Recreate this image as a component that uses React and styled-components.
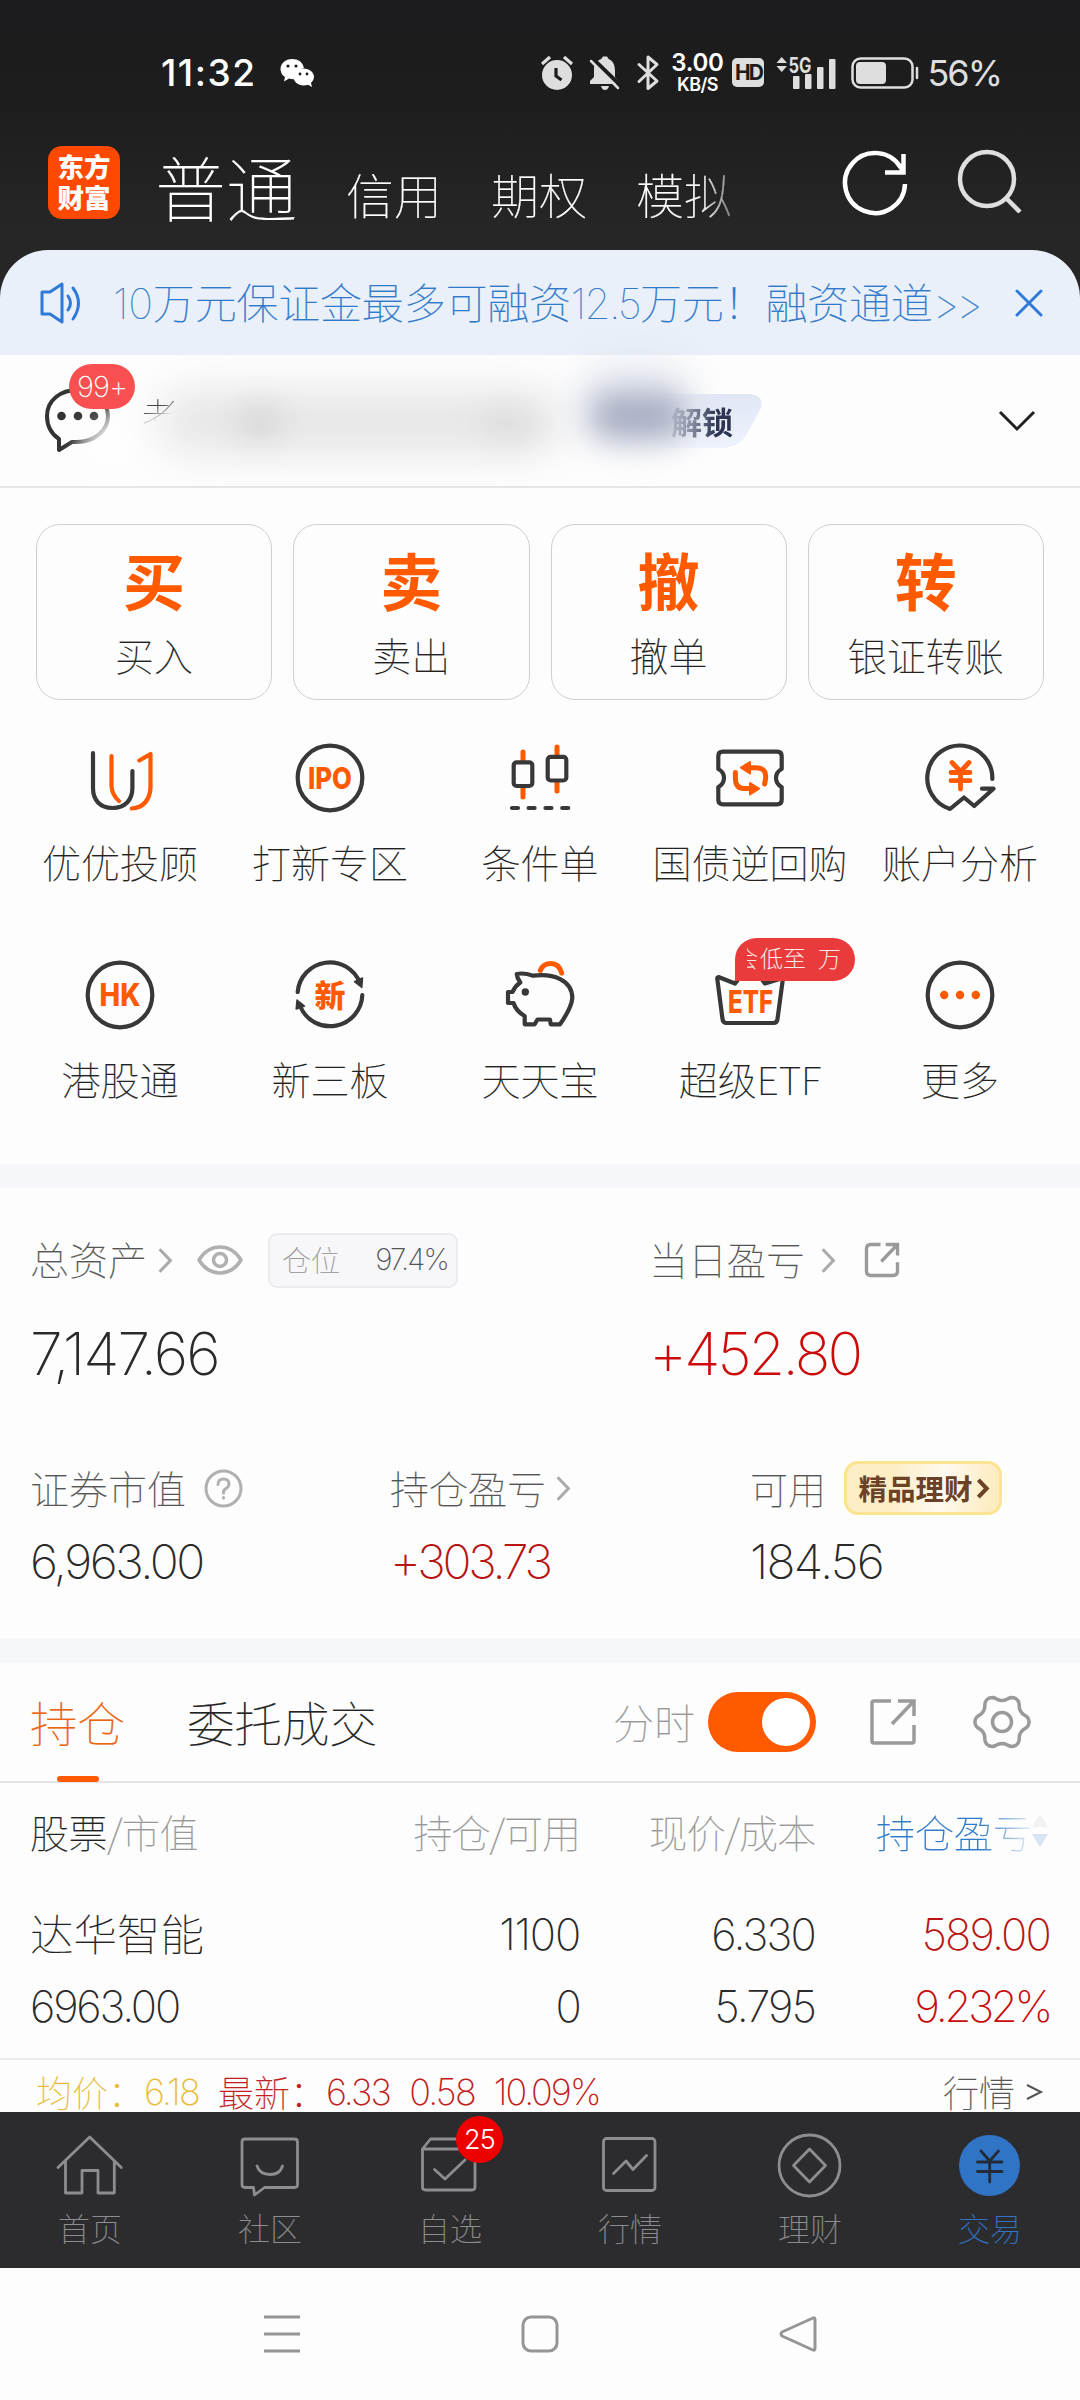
import styled, { createGlobalStyle, css } from "styled-components";

const GlobalStyle = createGlobalStyle`
  body {
    margin: 0;
    background: #fdfdfd;
    font-family: "Noto Sans CJK SC", sans-serif;
    font-weight: 100;
    color: #222;
  }
  * { box-sizing: border-box; }
`;

const ORANGE = "#ff5a00";
const INK = "#383838";
const GRAY = "#9a9a9a";

const Page = styled.div`
  width: 1080px;
  height: 2400px;
  overflow: hidden;
  display: flex;
  flex-direction: column;
  background: #fdfdfd;
`;

/* 중국어 라벨 */
const Label = styled.span`
  font-size: ${(p) => p.$size || 39}px;
  line-height: 1.2;
  font-weight: ${(p) => p.$weight || 100};
  letter-spacing: ${(p) => p.$spacing || 0}px;
  color: ${(p) => p.$color || "#222"};
  -webkit-text-stroke: ${(p) => (p.$weight ? 0 : 0.2)}px ${(p) => p.$color || "#222"};
  padding-bottom: ${(p) => p.$lift || 0}px;
  white-space: nowrap;
`;

/* 숫자 */
const Num = styled.span`
  font-family: "Inter", sans-serif;
  font-size: ${(p) => p.$size || 43.5}px;
  font-weight: ${(p) => p.$weight || 200};
  line-height: 1;
  letter-spacing: ${(p) => p.$spacing ?? -1.8}px;
  color: ${(p) => p.$color || "#2a2a2a"};
  white-space: nowrap;
`;

const Svg = styled.svg`
  display: block;
  flex: none;
  fill: none;
  stroke: ${(p) => p.$stroke || INK};
  stroke-width: ${(p) => p.$sw || 4};
  stroke-linecap: ${(p) => p.$cap || "round"};
  stroke-linejoin: ${(p) => p.$cap ? "miter" : "round"};
  overflow: visible;
`;

/* ---------- top ---------- */
const Top = styled.header`
  height: 298px;
  flex: none;
  background: linear-gradient(#1c1c1e 0, #1d1d1e 100px, #262626 230px);
`;

const StatusBar = styled.div`
  height: 145px;
  padding: 0 79px 0 161px;
  display: flex;
  align-items: center;
`;

const StatusRight = styled.div`
  margin-left: auto;
  display: flex;
  align-items: center;
`;

const NetSpeed = styled.div`
  width: 52px;
  margin: 0 9px 0 11px;
  display: flex;
  flex-direction: column;
  align-items: center;
  gap: 1px;
`;

const HdBadge = styled.div`
  width: 32px;
  height: 29px;
  border-radius: 5px;
  background: #dedede;
  display: flex;
  align-items: center;
  justify-content: center;
  margin-right: 12px;
`;

const TitleBar = styled.div`
  height: 105px;
  padding: 1px 58px 0 48px;
  display: flex;
  align-items: flex-start;
`;

const Logo = styled.div`
  width: 72px;
  height: 73px;
  border-radius: 14px;
  background: #ff4800;
  display: flex;
  flex-direction: column;
  align-items: center;
  justify-content: center;
  font-size: 26.5px;
  font-weight: 900;
  line-height: 31px;
  color: #fff;
  padding-bottom: 3px;
`;

const Titles = styled.nav`
  width: 610px;
  height: 82px;
  margin-left: 35px;
  display: flex;
  align-items: flex-end;
  gap: 49px;
  mask-image: linear-gradient(90deg, #000 545px, transparent 600px);
`;

const TitleTools = styled.div`
  margin: 4px 0 0 auto;
  display: flex;
  gap: 50px;
`;

/* ---------- sheet ---------- */
const Notice = styled.div`
  height: 105px;
  margin-top: -48px;
  flex: none;
  border-radius: 48px 48px 0 0;
  background: #eaf0f9;
  display: flex;
  align-items: center;
  padding: 2px 37px 0 39px;
`;

const NoticeText = styled.span`
  flex: 1;
  margin-left: 32px;
  font-family: "Inter", "Noto Sans CJK SC", sans-serif;
  font-size: 42px;
  letter-spacing: -0.2px;
  line-height: 50px;
  color: #2f7ac9;
  -webkit-text-stroke: 0.2px #2f7ac9;
  white-space: nowrap;
`;

const Tight = styled.span`
  letter-spacing: ${(p) => p.$by}px;
`;

const Account = styled.div`
  position: relative;
  height: 133px;
  flex: none;
  border-bottom: 2px solid #e6e6e8;
  display: flex;
  align-items: center;
  padding: 0 44px;
`;

const MsgBadge = styled.div`
  position: absolute;
  left: 69px;
  top: 9px;
  width: 66px;
  height: 45px;
  border-radius: 23px;
  background: #f85050;
  display: flex;
  align-items: center;
  justify-content: center;
`;

const HiddenName = styled.span`
  position: absolute;
  left: 142px;
  top: 38px;
  font-size: 36px;
  line-height: 1.2;
  color: #444;
  mask-image: linear-gradient(155deg, #000 35%, transparent 58%);
`;

/* 개인정보 흐림 처리 */
const Smudge = styled.div`
  position: absolute;
  left: ${(p) => p.$x}px;
  top: ${(p) => p.$y}px;
  width: ${(p) => p.$w}px;
  height: ${(p) => p.$h}px;
  border-radius: 30px;
  background: ${(p) => p.$color};
  filter: blur(${(p) => p.$blur}px);
`;

const Unlock = styled.div`
  position: absolute;
  left: 600px;
  top: 39px;
  width: 162px;
  height: 54px;
  background: linear-gradient(#e2e7f6, #eef2fd);
  clip-path: path("M0 0H150Q164 1 161 14L148 38Q140 54 120 54H0Z");
  display: flex;
  align-items: center;
  justify-content: flex-end;
  padding-right: 29px;
  mask-image: linear-gradient(90deg, transparent 55px, #000 115px);
`;

const Trades = styled.div`
  padding: 36px 36px 0;
  display: grid;
  grid-template-columns: repeat(4, 1fr);
  gap: 21px;
`;

const TradeCard = styled.div`
  height: 176px;
  border: 1.5px solid #cfcfd2;
  border-radius: 24px;
  display: flex;
  flex-direction: column;
  align-items: center;
  padding-top: 16px;
`;

const TradeGlyph = styled.span`
  font-size: 62px;
  line-height: 76px;
  height: 90px;
  font-weight: 700;
  color: ${ORANGE};
`;

const Shortcuts = styled.div`
  height: 464px;
  flex: none;
  padding: 43px 15px 0;
  display: grid;
  grid-template-columns: repeat(5, 210px);
  grid-auto-rows: 217px;
`;

const Shortcut = styled.div`
  position: relative;
  display: flex;
  flex-direction: column;
  align-items: center;
  gap: 25px;
`;

const Promo = styled.div`
  position: absolute;
  left: 90px;
  top: -22px;
  width: 120px;
  height: 43px;
  border-radius: 22px 22px 22px 0;
  background: #e93b3b;
  display: flex;
  align-items: center;
  padding: 0 0 3px 12px;
`;

const PromoCut = styled.span`
  width: 11px;
  height: 29px;
  overflow: hidden;
  display: flex;
  justify-content: flex-end;
  margin-right: 2px;
`;

const Band = styled.div`
  height: 24px;
  flex: none;
  background: #f6f7fa;
`;

/* ---------- assets ---------- */
const Assets = styled.section`
  height: 450px;
  flex: none;
  padding: 42px 30px 0;
`;

const AssetGrid = styled.div`
  display: grid;
  grid-template-columns: ${(p) => p.$cols};
  margin-bottom: 42px;
`;

const AssetHead = styled.div`
  height: 60px;
  display: flex;
  align-items: center;
`;

const AssetValue = styled.div`
  height: ${(p) => p.$h}px;
  display: flex;
  align-items: center;
`;

const Position = styled.div`
  width: 190px;
  height: 55px;
  margin-left: 25px;
  border: 2px solid #ececee;
  border-radius: 9px;
  background: #f7f7fa;
  display: flex;
  align-items: center;
  justify-content: space-between;
  padding: 0 8px 0 12px;
`;

const Premium = styled.div`
  width: 158px;
  height: 54px;
  margin-left: 18px;
  border: 3px solid #fbe391;
  border-radius: 14px;
  background: linear-gradient(100deg, #fdeec6 30%, #fffaf0 62%, #fdecc0 95%);
  display: flex;
  align-items: center;
  justify-content: center;
  gap: 4px;
`;

/* ---------- holdings ---------- */
const HoldTabs = styled.div`
  height: 121px;
  flex: none;
  border-bottom: 2px solid #e3e3e5;
  padding: 0 50px 0 30px;
  display: flex;
  align-items: center;
`;

const HoldTab = styled.div`
  position: relative;
  height: 120px;
  display: flex;
  align-items: center;
  margin-right: 62px;
  ${(p) =>
    p.$active &&
    css`
      &::after {
        content: "";
        position: absolute;
        left: 27px;
        bottom: 0;
        width: 42px;
        height: 6px;
        border-radius: 3px;
        background: ${ORANGE};
      }
    `}
`;

const HoldTools = styled.div`
  margin-left: auto;
  display: flex;
  align-items: center;
`;

const Toggle = styled.div`
  width: 108px;
  height: 60px;
  border-radius: 30px;
  background: ${ORANGE};
  padding: 6px;
  display: flex;
  justify-content: flex-end;
  margin: 0 54px 0 13px;
`;

const Knob = styled.div`
  width: 48px;
  height: 48px;
  border-radius: 50%;
  background: #fff;
`;

const HoldRow = styled.div`
  height: ${(p) => p.$h}px;
  flex: none;
  padding: 0 30px ${(p) => p.$pb || 0}px 30px;
  display: grid;
  grid-template-columns: 250px 300px 235px 235px;
  align-items: center;
`;

const Right = styled.div`
  display: flex;
  align-items: center;
  justify-content: flex-end;
`;

const SortHead = styled.div`
  padding-left: 61px;
  display: flex;
  align-items: center;
  white-space: nowrap;
  mask-image: linear-gradient(90deg, #000 165px, rgba(0, 0, 0, 0.18) 212px);
`;

const RowEnd = styled.div`
  height: 28px;
  flex: none;
`;

const PriceStrip = styled.div`
  height: 54px;
  flex: none;
  border-top: 2px solid #ececee;
  padding: 11px 38px 0 36px;
  display: flex;
  align-items: center;
`;

const Gap = styled.span`
  width: ${(p) => p.$w}px;
  flex: none;
`;

const Spacer = styled.span`
  flex: 1;
`;

/* ---------- bottom ---------- */
const TabBar = styled.nav`
  height: 156px;
  flex: none;
  background: #2c2c2e;
  display: grid;
  grid-template-columns: repeat(6, 180px);
`;

const TabItem = styled.div`
  position: relative;
  display: flex;
  flex-direction: column;
  align-items: center;
  padding-top: 21px;
  gap: 11px;
`;

const TabBadge = styled.div`
  position: absolute;
  left: 96px;
  top: 4px;
  width: 47px;
  height: 47px;
  border-radius: 50%;
  background: #ee0000;
  display: flex;
  align-items: center;
  justify-content: center;
`;

const SysNav = styled.div`
  height: 132px;
  flex: none;
  display: flex;
  align-items: center;
  justify-content: space-between;
  padding: 0 263px;
`;

const IconText = styled.text`
  font-family: "Inter", "Noto Sans CJK SC", sans-serif;
  font-size: ${(p) => p.$size || 30}px;
  font-weight: ${(p) => p.$weight || 800};
  fill: ${ORANGE};
  stroke: none;
`;

const ShortcutIcon = ({ children }) => (
  <Svg width="70" height="70" viewBox="0 0 70 70" $sw={4.2}>
    {children}
  </Svg>
);

// 톱니 6개짜리 설정 아이콘 외곽선
const gearPath =
  Array.from({ length: 72 }, (_, i) => {
    const a = (i * 5 * Math.PI) / 180;
    const wave = Math.cos(6 * a);
    const r = 24.3 + 2.8 * Math.sign(wave) * Math.pow(Math.abs(wave), 0.7);
    return `${i ? "L" : "M"}${(28 + r * Math.cos(a)).toFixed(1)} ${(28 + r * Math.sin(a)).toFixed(1)}`;
  }).join("") + "Z";

const shortcuts = [
  {
    name: "优优投顾",
    icon: (
      <>
        <path d="M8 10V45C8 57 15 65 27.500 65S47.400 57 47.400 45V28" />
        <path stroke={ORANGE} d="M26.500 13V43Q27 52 34 58M54.300 17.500L65.500 11V45Q64 64 46.700 65.500" />
      </>
    ),
  },
  {
    name: "打新专区",
    icon: (
      <>
        <circle cx="35" cy="35" r="32.300" />
        <IconText x="13" y="46" textLength="44" lengthAdjust="spacingAndGlyphs">IPO</IconText>
      </>
    ),
  },
  {
    name: "条件单",
    icon: (
      <>
        <path stroke={ORANGE} strokeWidth="5" d="M18 9V18M18 45V54M52 4V12M52 40V48" />
        <rect x="8.700" y="19.300" width="18.600" height="23.700" rx="3" />
        <rect x="42.700" y="13.800" width="18.600" height="23.700" rx="3" />
        <path d="M7 65H13M23.600 65H29.600M40.500 65H46.500M57.200 65H63.200" />
      </>
    ),
  },
  {
    name: "国债逆回购",
    icon: (
      <>
        <path d="M8 8.700H62Q66.700 8.700 66.700 13V26Q61 29 61 35T66.700 44V57Q66.700 61.300 62 61.300H8Q3.300 61.300 3.300 57V44Q9 41 9 35T3.300 26V13Q3.300 8.700 8 8.700Z" />
        <path stroke={ORANGE} strokeWidth="5" d="M20.400 29.500V35Q20.400 45.500 29 45.500H36M49.600 41Q54 24.700 41 24.700H34" />
        <path fill={ORANGE} stroke={ORANGE} strokeWidth="2" d="M35 40L44 45.700L35 51.500ZM35 19L26 24.700L35 30.500Z" />
      </>
    ),
  },
  {
    name: "账户分析",
    icon: (
      <>
        <path d="M67.300 36A32.500 32.500 0 1 0 25 66L39 54.500L49.200 63L68.500 45.700H57" />
        <path stroke={ORANGE} strokeWidth="4.800" d="M27 19.500L35.500 28.500L44 19.500M26 29.500H45M26 37.700H45M35.500 29V46" />
      </>
    ),
  },
  {
    name: "港股通",
    icon: (
      <>
        <circle cx="35" cy="35" r="32.300" />
        <IconText x="14.500" y="46" $size={31} textLength="41" lengthAdjust="spacingAndGlyphs">HK</IconText>
      </>
    ),
  },
  {
    name: "新三板",
    icon: (
      <>
        <path d="M2.700 32A32.300 32.300 0 0 1 65 23M67.300 35A32.300 32.300 0 0 1 5.500 47" />
        <path fill={INK} strokeWidth="1.500" d="M59.500 21.700L67.500 18L66.800 27.500ZM2 40L1.200 49L9.500 46Z" />
        <IconText x="19.500" y="46.500" $size={31} $weight={900}>新</IconText>
      </>
    ),
  },
  {
    name: "天天宝",
    icon: (
      <>
        <path d="M11.700 14Q19 12.500 28 15.700C48 13 67.300 20 67.300 38Q66.500 48 55 64.300H45.700L45 59.500H32.500L29.700 64.300H19.700V56Q11 51 8.500 43H3V32H7.500Q10 26 15.300 22.500Q12 18 11.700 14Z" />
        <circle cx="20.300" cy="32" r="3.700" fill={INK} stroke="none" />
        <path stroke={ORANGE} strokeWidth="5" d="M35.300 10.500Q38 3.500 46 3.500T56.700 13" />
      </>
    ),
  },
  {
    name: "超级ETF",
    promo: true,
    icon: (
      <>
        <path d="M20 23.500L3.500 17Q2 17 2.300 19L7.500 59Q8 63 11.500 63H58.500Q62 63 62.500 59L68 18L50 23.500Q45 18 44 8H27Q25 18 20 23.500Z" />
        <IconText x="13" y="53" $size={31} textLength="45" lengthAdjust="spacingAndGlyphs">ETF</IconText>
      </>
    ),
  },
  {
    name: "更多",
    icon: (
      <>
        <circle cx="35" cy="35" r="32.300" />
        <g fill={ORANGE} stroke="none">
          <circle cx="19.200" cy="35" r="4.200" />
          <circle cx="35" cy="35" r="4.200" />
          <circle cx="50.800" cy="35" r="4.200" />
        </g>
      </>
    ),
  },
];

const tabs = [
  { name: "首页", icon: <path d="M0 34.500L31.700 4L63.300 34.500M7.500 28V60H24V37.500H40V60H56.300V28" /> },
  {
    name: "社区",
    icon: <path d="M7 6H56.500Q59.500 6 59.500 9V51.500Q59.500 54.500 56.500 54.500H26.500L16.500 62L15.500 54.500H7Q4 54.500 4 51.500V9Q4 6 7 6ZM19 33Q22 41.500 32 41.500T44.500 33" />,
  },
  {
    name: "自选",
    badge: "25",
    icon: <path d="M4.500 16V54Q4.500 57 7.500 57H54Q57 57 57 54V16ZM4.500 16L12.500 6H49L57 16M16.500 36.500L27 46L47 27" />,
  },
  {
    name: "行情",
    icon: (
      <>
        <rect x="5.500" y="5.500" width="51.500" height="52" rx="3" />
        <path d="M15.500 40.500L28 28L35 36.500L48.500 22.500" />
      </>
    ),
  },
  {
    name: "理财",
    icon: (
      <>
        <circle cx="31.500" cy="32.500" r="30.500" />
        <path d="M31.500 16L47.500 32.500L31.500 49L15.500 32.500Z" />
      </>
    ),
  },
  {
    name: "交易",
    active: true,
    icon: (
      <>
        <circle cx="31.500" cy="32.500" r="30.500" fill="#2f74c5" stroke="none" />
        <path stroke="#232b38" d="M23 18L31.700 28L40.500 18M19.500 29H44M19.500 38.500H44M31.700 28V49" />
      </>
    ),
  },
];

const Chevron = ({ w = 14, h = 25, color = "#aaa", sw = 2.8 }) => (
  <Svg width={w} height={h} viewBox="0 0 13 23" $stroke={color} $sw={sw} $cap="butt">
    <path d="M1.500 1L11.500 11.500L1.500 22" />
  </Svg>
);

const Share = ({ size, sw, r }) => (
  <Svg width={size} height={size} viewBox="0 0 46 46" $stroke={GRAY} $sw={sw} $cap="butt">
    <path d={`M21 2H${2 + r}Q2 2 2 ${2 + r}V${44 - r}Q2 44 ${2 + r} 44H${44 - r}Q44 44 44 ${44 - r}V26M28 2H44V17M44 2L22 25`} />
  </Svg>
);

const Status = () => (
  <StatusBar>
    <Num $size={37} $weight={500} $color="#fff" $spacing={1.5}>11:32</Num>
    <Gap $w={24} />
    <Svg width="35" height="30" viewBox="0 0 35 30" $sw={0.01}>
      <path fill="#fff" d="M12 1C5.500 1 .5 5.500 .5 11Q.5 16 5 19L4 23.500L9 20.500Q12 21.500 15 21A11 9.500 0 0 1 24 10Q22 1 12 1Z" />
      <path fill="#fff" d="M23.500 10.500C17.500 10.500 13.500 14.500 13.500 19S18 27.500 23.500 27.500Q26 27.500 28 26.800L32 29L31 25Q34 22.500 34 19C34 14.500 29.500 10.500 23.500 10.500Z" />
      <g fill="#1c1c1e">
        <circle cx="8" cy="8" r="1.600" /><circle cx="16" cy="8" r="1.600" />
        <circle cx="20" cy="16" r="1.400" /><circle cx="27" cy="16" r="1.400" />
      </g>
    </Svg>
    <StatusRight>
      <Svg width="32" height="36" viewBox="0 0 32 36" $stroke="#dedede" $sw={3.2} $cap="butt">
        <circle cx="16" cy="20" r="15" fill="#dedede" stroke="none" />
        <path d="M1 9L9 2M31 9L23 2" />
        <path stroke="#1c1c1e" d="M15 13V21L20.500 25" />
      </Svg>
      <Gap $w={16} />
      <Svg width="32" height="36" viewBox="0 0 32 36" $stroke="#dedede" $sw={2.500}>
        <path fill="#dedede" stroke="none" d="M10 5Q13 4 14 1.500H18Q19 4 21.500 5Q26 8 26 16V22L30 27V29H1V26L5 22V13Q5 8 10 5ZM12 31H20Q19 35 16 35T12 31Z" />
        <path stroke="#1c1c1e" strokeWidth="4" d="M4 4L32 31" />
        <path d="M2 6L29 33" />
      </Svg>
      <Gap $w={15} />
      <Svg width="24" height="36" viewBox="0 0 24 36" $stroke="#dedede" $sw={3}>
        <path d="M3 9.500L21 26L12 33.500V2L21 9.500L3 26.500" />
      </Svg>
      <NetSpeed>
        <Num $size={24} $weight={600} $color="#fff" $spacing={-0.3}>3.00</Num>
        <Num $size={18} $weight={600} $color="#fff" $spacing={-0.6}>KB/S</Num>
      </NetSpeed>
      <HdBadge>
        <Num $size={21} $weight={700} $color="#1c1c1e" $spacing={-2}>HD</Num>
      </HdBadge>
      <Svg width="62" height="34" viewBox="0 0 62 34" $sw={0.01}>
        <g fill="#dedede">
          <path d="M.5 7H11L5.700 1ZM.5 10H11L5.700 16Z" />
          <rect x="17" y="20" width="6.500" height="13" rx="1" />
          <rect x="29" y="18" width="6.500" height="15" rx="1" />
          <rect x="41" y="11" width="6.500" height="22" rx="1" />
          <rect x="53" y="3" width="6.500" height="30" rx="1" />
          <text x="12.500" y="16.500" fontFamily="Inter" fontSize="21" fontWeight="700" textLength="23" lengthAdjust="spacingAndGlyphs">5G</text>
        </g>
      </Svg>
      <Gap $w={13} />
      <Svg width="68" height="32" viewBox="0 0 68 32" $stroke="#dedede" $sw={2.500}>
        <rect x="1.500" y="1.500" width="60" height="29" rx="8" />
        <rect x="5" y="5" width="30" height="22" rx="4" fill="#dedede" stroke="none" />
        <path d="M66 11V21" />
      </Svg>
      <Gap $w={8} />
      <Num $size={36} $weight={400} $color="#dedede" $spacing={-2}>56%</Num>
    </StatusRight>
  </StatusBar>
);

const App = () => (
  <>
    <GlobalStyle />
    <Page>
      <Top>
        <Status />
        <TitleBar>
          <Logo>
            <span>东方</span>
            <span>财富</span>
          </Logo>
          <Titles>
            <Label $size={71}>
              <Label $size={71} $color="#fff">普通</Label>
            </Label>
            <Label $size={48} $color="#fff" $lift={5}>信用</Label>
            <Label $size={48} $color="#fff" $lift={5}>期权</Label>
            <Label $size={48} $color="#fff" $lift={5}>模拟</Label>
          </Titles>
          <TitleTools>
            <Svg width="64" height="64" viewBox="0 0 64 64" $stroke="#fff" $sw={4.500} $cap="butt">
              <path d="M61 34A30 30 0 1 1 57 18L60 22M59.500 4V22.500H41" />
            </Svg>
            <Svg width="64" height="64" viewBox="0 0 64 64" $stroke="#dfdfdf" $sw={4.500} $cap="butt">
              <circle cx="29" cy="29" r="27" />
              <path d="M48 48L62 62" />
            </Svg>
          </TitleTools>
        </TitleBar>
      </Top>

      <Notice>
        <Svg width="42" height="42" viewBox="-1 1 42 42" $stroke="#2f7ad8" $sw={3}>
          <path d="M2 10H10L22 2V40L10 32H2ZM28 14Q33 21 28 28M33 6Q44 21 33 37" />
        </Svg>
        <NoticeText>
          10万元保证金最多可融资<Tight $by={-1.7}>12.5</Tight>万元！融资通道<Tight $by={-3.4}>&gt;&gt;</Tight>
        </NoticeText>
        <Svg width="28" height="28" viewBox="0 1 28 28" $stroke="#2f7ad8" $sw={3}>
          <path d="M2 2L26 26M26 2L2 26" />
        </Svg>
      </Notice>

      <Account>
        <Svg width="66" height="66" viewBox="0 0 66 66" $sw={4} $stroke="url(#bubble)">
          <defs>
            <linearGradient id="bubble" x1="0.3" y1="0.4" x2="1" y2="1">
              <stop offset="0.4" stopColor="#333" />
              <stop offset="0.8" stopColor="#ccc" />
            </linearGradient>
          </defs>
          <path d="M15 51Q3 43 3 28C3 12 17 2 33 2S64 13 64 28S50 54 33 54Q30 54 28 54L15 62Z" />
          <g fill="#333" stroke="none">
            <circle cx="17.500" cy="28" r="4.300" />
            <circle cx="34" cy="28" r="4.300" />
            <circle cx="50" cy="28" r="4.300" />
          </g>
        </Svg>
        <Smudge $x={84} $y={66} $w={60} $h={50} $blur={14} $color="rgba(255,255,255,.6)" />
        <Smudge $x={160} $y={38} $w={400} $h={58} $blur={22} $color="#e4e4e4" />
        <Smudge $x={238} $y={48} $w={44} $h={38} $blur={14} $color="rgba(180,180,180,.3)" />
        <Smudge $x={480} $y={52} $w={60} $h={36} $blur={14} $color="rgba(190,190,190,.22)" />
        <HiddenName>老</HiddenName>
        <Unlock>
          <Label $size={31} $weight={700} $color="#2a3350">解锁</Label>
        </Unlock>
        <Smudge $x={580} $y={8} $w={110} $h={80} $blur={20} $color="rgba(200,208,228,.4)" />
        <Smudge $x={590} $y={38} $w={96} $h={46} $blur={15} $color="rgba(146,152,178,.75)" />
        <MsgBadge>
          <Num $size={29} $color="#fff" $spacing={-0.8}>99+</Num>
        </MsgBadge>
        <Gap $w={888} />
        <Svg width="38" height="20" viewBox="0 0 38 20" $stroke="#222" $sw={3} $cap="butt">
          <path d="M2 1L19 18L36 1" />
        </Svg>
      </Account>

      <Trades>
        {[["买", "买入"], ["卖", "卖出"], ["撤", "撤单"], ["转", "银证转账"]].map(([glyph, name]) => (
          <TradeCard key={name}>
            <TradeGlyph>{glyph}</TradeGlyph>
            <Label>{name}</Label>
          </TradeCard>
        ))}
      </Trades>

      <Shortcuts>
        {shortcuts.map((s) => (
          <Shortcut key={s.name}>
            <ShortcutIcon>{s.icon}</ShortcutIcon>
            <Label>{s.name}</Label>
            {s.promo && (
              <Promo>
                <PromoCut><Label $size={23} $color="#fff">会</Label></PromoCut>
                <Label $size={23} $color="#fff">低至</Label>
                <Gap $w={12} />
                <Label $size={23} $color="#fff">万</Label>
              </Promo>
            )}
          </Shortcut>
        ))}
      </Shortcuts>

      <Band />

      <Assets>
        <AssetGrid $cols="619px 1fr">
          <AssetHead>
            <Label $color="#555" $lift={4}>总资产</Label>
            <Gap $w={11} />
            <Chevron />
            <Gap $w={25} />
            <Svg width="46" height="30" viewBox="0 0 46 30" $stroke="#b0b0b0" $sw={3.500}>
              <path d="M2 15Q10 2 23 2T44 15Q36 28 23 28T2 15Z" />
              <circle cx="23" cy="15" r="6.500" />
            </Svg>
            <Position>
              <Label $size={29} $color="#999" $lift={1}>仓位</Label>
              <Num $size={29.5} $color="#555">97.4%</Num>
            </Position>
          </AssetHead>
          <AssetHead>
            <Label $color="#555" $lift={4}>当日盈亏</Label>
            <Gap $w={16} />
            <Chevron />
            <Gap $w={30} />
            <Share size={34} sw={4.500} r={6} />
          </AssetHead>
          <AssetValue $h={126}><Num $size={59} $spacing={-1.9}>7,147.66</Num></AssetValue>
          <AssetValue $h={126}><Num $size={59} $color="#cc0a0a" $spacing={-2.8}>+452.80</Num></AssetValue>
        </AssetGrid>
        <AssetGrid $cols="360px 360px 1fr">
          <AssetHead>
            <Label $color="#555" $lift={1}>证券市值</Label>
            <Gap $w={18} />
            <Svg width="39" height="39" viewBox="0 0 39 39" $stroke="#b0b0b0" $sw={3}>
              <circle cx="19.500" cy="19.500" r="17.500" />
              <path d="M14 15.500Q14 10 19.500 10T25 15Q25 17.500 22 19.500T19.500 24M19.500 28.500V29" />
            </Svg>
          </AssetHead>
          <AssetHead>
            <Label $color="#555" $lift={1}>持仓盈亏</Label>
            <Gap $w={10} />
            <Chevron />
          </AssetHead>
          <AssetHead>
            <Label $color="#555" $size={38} $lift={1}>可用</Label>
            <Premium>
              <Label $size={28.5} $weight={700} $color="#6b4226">精品理财</Label>
              <Chevron w={11} h={19} color="#6b4226" sw={5} />
            </Premium>
          </AssetHead>
          <AssetValue $h={87}><Num $size={48} $spacing={-2.5}>6,963.00</Num></AssetValue>
          <AssetValue $h={87}><Num $size={48} $color="#b81414" $spacing={-3.2}>+303.73</Num></AssetValue>
          <AssetValue $h={87}><Num $size={48} $spacing={-1.7}>184.56</Num></AssetValue>
        </AssetGrid>
      </Assets>

      <Band />

      <HoldTabs>
        <HoldTab $active><Label $size={47.5} $color="#e8640f">持仓</Label></HoldTab>
        <HoldTab><Label $size={47.5}>委托成交</Label></HoldTab>
        <HoldTools>
          <Label $size={41} $color="#999">分时</Label>
          <Toggle><Knob /></Toggle>
          <Share size={46} sw={3.500} r={2} />
          <Gap $w={58} />
          <Svg width="56" height="56" viewBox="0 0 56 56" $stroke={GRAY} $sw={3.500}>
            <path d={gearPath} />
            <circle cx="28" cy="28" r="9.500" />
          </Svg>
        </HoldTools>
      </HoldTabs>

      <HoldRow $h={103} $pb={7}>
        <span>
          <Label $spacing={-0.5}>股票</Label>
          <Label $color="#999" $spacing={-1}>/市值</Label>
        </span>
        <Right><Label $color="#999" $spacing={-1}>持仓/可用</Label></Right>
        <Right><Label $color="#999" $spacing={-1}>现价/成本</Label></Right>
        <SortHead>
          <Label $color="#2f7ac9">持仓盈亏</Label>
          <Svg width="16" height="34" viewBox="0 0 16 34" $sw={0.01}>
            <path fill="#bbb" d="M0 13L8 0L16 13Z" />
            <path fill="#2f7ac9" d="M0 20L8 33L16 20Z" />
          </Svg>
        </SortHead>
      </HoldRow>
      <HoldRow $h={98}>
        <Label $size={43.5} $lift={4}>达华智能</Label>
        <Right><Num $spacing={-1.2}>1100</Num></Right>
        <Right><Num>6.330</Num></Right>
        <Right><Num $color="#b81414">589.00</Num></Right>
      </HoldRow>
      <HoldRow $h={46}>
        <Num $spacing={-2.2}>6963.00</Num>
        <Right><Num>0</Num></Right>
        <Right><Num>5.795</Num></Right>
        <Right><Num $color="#c80c0c" $spacing={-3.2}>9.232%</Num></Right>
      </HoldRow>
      <RowEnd />
      <PriceStrip>
        <Label $size={36} $color="#e8bd3c">均价：</Label>
        <Num $size={36} $color="#e8bd3c">6.18</Num>
        <Gap $w={19} />
        <Label $size={36} $color="#c02020">最新：</Label>
        <Num $size={36} $color="#c02020">6.33</Num>
        <Gap $w={19} />
        <Num $size={36} $color="#c02020">0.58</Num>
        <Gap $w={19} />
        <Num $size={36} $color="#c02020" $spacing={-2.1}>10.09%</Num>
        <Spacer />
        <Label $size={36} $color="#555">行情</Label>
        <Gap $w={11} />
        <Svg width="16" height="16" viewBox="0 0 16 16" $stroke="#555" $sw={2} $cap="butt">
          <path d="M1 1L15 8L1 15" />
        </Svg>
      </PriceStrip>

      <TabBar>
        {tabs.map((t) => (
          <TabItem key={t.name}>
            <Svg width="64" height="64" viewBox="0 0 64 64" $stroke="#8d8d8f" $sw={2.8}>
              {t.icon}
            </Svg>
            <Label $size={32} $color={t.active ? "#2f74c5" : "#8d8d8f"}>{t.name}</Label>
            {t.badge && (
              <TabBadge><Num $size={27} $weight={300} $color="#fff" $spacing={-0.8}>{t.badge}</Num></TabBadge>
            )}
          </TabItem>
        ))}
      </TabBar>

      <SysNav>
        <Svg width="38" height="38" viewBox="0 0 38 38" $stroke="#959595" $sw={3} $cap="butt">
          <path d="M1 2H37M1 19H37M1 36H37" />
        </Svg>
        <Svg width="38" height="38" viewBox="0 0 38 38" $stroke="#959595" $sw={3}>
          <rect x="2" y="2" width="34" height="34" rx="8" />
        </Svg>
        <Svg width="38" height="38" viewBox="0 0 38 38" $stroke="#959595" $sw={3}>
          <path d="M34 3Q36 2 36 5V33Q36 36 34 35L3 21Q1 19 3 17Z" />
        </Svg>
      </SysNav>
    </Page>
  </>
);

export default App;
